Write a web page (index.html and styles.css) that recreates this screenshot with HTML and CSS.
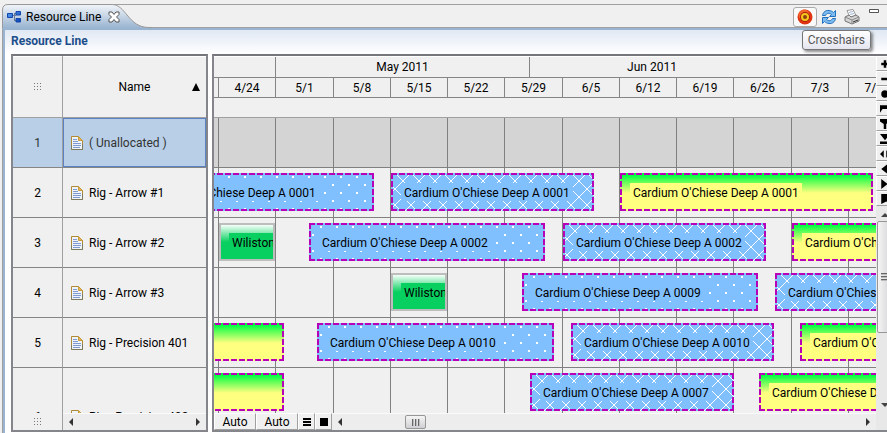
FILE: index.html
```html
<!DOCTYPE html>
<html lang="en">
<head>
<meta charset="utf-8">
<title>Resource Line</title>
<link rel="stylesheet" href="styles.css">
</head>
<body>
<svg class="defs" aria-hidden="true">
  <defs>
    <linearGradient id="tabFill" x1="0" y1="0" x2="0" y2="1"><stop offset="0" stop-color="#f2f5f9"/><stop offset="1" stop-color="#99b4d1"/></linearGradient>
    <linearGradient id="blueBox" x1="0" y1="0" x2="1" y2="1"><stop offset="0" stop-color="#5aa2f4"/><stop offset="1" stop-color="#0a3fb4"/></linearGradient>
    <symbol id="doc" viewBox="0 0 12 14">
      <path d="M.5.500h7l4 4v9H.5z" fill="#eef3fb" stroke="#b08a35"/>
      <path d="M.5 9v4.500h11V8" fill="none" stroke="#7d7a5c"/>
      <path d="M7.500.500v4h4z" fill="#e9b44c" stroke="#c59a3f"/>
      <path d="M2 3.500h4M2 5.500h5M2 7.500h8M2 9.500h8M2 11.500h7" stroke="#7f9ad0"/>
    </symbol>
    <symbol id="left" viewBox="0 0 8 8"><path d="M6 0v8L2 4z" fill="#333"/></symbol>
    <symbol id="right" viewBox="0 0 8 8"><path d="M2 0v8l4-4z" fill="#333"/></symbol>
    <symbol id="grip" viewBox="0 0 8 8"><path d="M0 .5h8M0 3.500h8M0 6.500h8" stroke="#777" stroke-dasharray="1 2"/></symbol>
  </defs>
</svg>

<header class="strip">
  <div class="tab">
    <svg class="tab-shape" width="150" height="28" viewBox="0 0 150 28" aria-hidden="true">
      <path d="M.5 28V10Q.5 4.500 6 4.500H110C124 4.500 126 27.500 147 27.500H150V28z" fill="url(#tabFill)"/>
      <path d="M.5 28V10Q.5 4.500 6 4.500H110C124 4.500 126 27.500 147 27.500H150" fill="none" stroke="#999"/>
    </svg>
    <svg class="tab-icon" width="14" height="12" viewBox="0 0 14 12" aria-hidden="true">
      <path d="M5 4.500h4M7.500 2.500v7M7 9.500h3M7 2.500h3" stroke="#6b7b96" fill="none"/>
      <path d="M.5 2.500h5v4h-5zM9 .5h4.500v3.500H9zM9 7.500h4.500v3.500H9z" fill="url(#blueBox)" stroke="#1248ac"/>
    </svg>
    <span class="tab-text">Resource Line</span>
    <button class="icon-btn" aria-label="Close">
      <svg width="12" height="12" viewBox="0 0 12 12"><path d="M1 1h3l2 2.500L8 1h3v2.500L8.500 6 11 8.500V11H8L6 8.500 4 11H1V8.500L3.500 6 1 3.500z" fill="#fff" stroke="#555"/></svg>
    </button>
  </div>
  <div class="strip-rest">
    <button class="icon-btn hot" aria-label="Crosshairs">
      <svg width="16" height="16" viewBox="0 0 16 16"><circle cx="8" cy="8" r="7.500" fill="#df3512"/><circle cx="7" cy="6" r="5.500" fill="#f2622b"/><circle cx="8" cy="8" r="5" fill="#a82108"/><circle cx="8" cy="8" r="4" fill="#f7c71d"/><circle cx="8" cy="8" r="2" fill="#8c4214"/></svg>
    </button>
    <button class="icon-btn" aria-label="Refresh">
      <svg width="16" height="16" viewBox="0 0 16 16"><g stroke="#2671bd" fill="#7dbcf0" stroke-linejoin="round"><path d="M1.500 6.500C2 3 5 1 8 1.500c2 .2 3.500 1 4.500 2L14.500 1.500v6h-6L10.500 5.500C8.500 3.500 5.500 4 4.500 6.500z"/><path d="M14.500 9.500C14 13 11 15 8 14.500c-2-.2-3.500-1-4.500-2L1.500 14.500v-6h6L5.500 10.500c2 2 5 1.500 6-1z"/></g></svg>
    </button>
    <button class="icon-btn" aria-label="Print">
      <svg width="16" height="16" viewBox="0 0 16 16"><path d="M3 1.500l6-1 3 6-6 2z" fill="#fff" stroke="#999"/><path d="M5 3.500l4-1M6 5.500l4-1" stroke="#9fb4d2"/><path d="M1 8l4-2 2 2 5-2 3 2v4l-7 3-7-3z" fill="#d2d2d2" stroke="#777"/><path d="M1 8l7 3 7-3M8 11v4" fill="none" stroke="#8b8b8b"/><path d="M9 13l5-2" stroke="#333"/></svg>
    </button>
    <button class="icon-btn minimize" aria-label="Minimize"><svg width="10" height="4" viewBox="0 0 10 4"><path d="M.5.500h9v3h-9z" fill="#fff" stroke="#555"/></svg></button>
    <div class="tooltip" role="tooltip">Crosshairs</div>
  </div>
</header>

<main class="view">
  <h1>Resource Line</h1>
  <div class="panels">
    <section class="panel names">
      <div class="clip">
        <table>
          <thead><tr><th class="num"><svg width="8" height="8" aria-hidden="true"><use href="#grip"/></svg></th><th><div class="name-head"><span>Name</span><svg width="8" height="8" viewBox="0 0 8 8" aria-hidden="true"><path d="M4 0l4 8H0z"/></svg></div></th></tr></thead>
          <tbody>
            <tr class="selected"><td class="num">1</td><td><div class="name"><svg width="12" height="14"><use href="#doc"/></svg>( Unallocated )</div></td></tr>
            <tr><td class="num">2</td><td><div class="name"><svg width="12" height="14"><use href="#doc"/></svg>Rig - Arrow #1</div></td></tr>
            <tr><td class="num">3</td><td><div class="name"><svg width="12" height="14"><use href="#doc"/></svg>Rig - Arrow #2</div></td></tr>
            <tr><td class="num">4</td><td><div class="name"><svg width="12" height="14"><use href="#doc"/></svg>Rig - Arrow #3</div></td></tr>
            <tr><td class="num">5</td><td><div class="name"><svg width="12" height="14"><use href="#doc"/></svg>Rig - Precision 401</div></td></tr>
            <tr class="tall"><td class="num">6</td><td><div class="name"><svg width="12" height="14"><use href="#doc"/></svg>Rig - Precision 402</div></td></tr>
          </tbody>
        </table>
      </div>
      <div class="foot">
        <div class="corner"><svg width="8" height="8" aria-hidden="true"><use href="#grip"/></svg></div>
        <div class="scroll-x"><button aria-label="Scroll left"><svg width="8" height="8"><use href="#left"/></svg></button><button aria-label="Scroll right"><svg width="8" height="8"><use href="#right"/></svg></button></div>
      </div>
    </section>

    <section class="panel chart">
      <div class="chart-main">
        <div class="clip">
          <div class="months"><span></span><span>May 2011</span><span>Jun 2011</span><span></span></div>
          <div class="weeks"><span></span><span>4/24</span><span>5/1</span><span>5/8</span><span>5/15</span><span>5/22</span><span>5/29</span><span>6/5</span><span>6/12</span><span>6/19</span><span>6/26</span><span>7/3</span><span>7/10</span></div>
          <div class="spacer"></div>
          <div class="rows">
            <div class="lines" aria-hidden="true"><i></i><i></i><i></i><i></i><i></i><i></i><i></i><i></i><i></i><i></i><i></i><i></i><i></i></div>
            <div class="row shaded"></div>
            <div class="row">
              <div class="bar dots" style="margin-left:-77px;width:237px"><span>Cardium O'Chiese Deep A 0001</span></div>
              <div class="bar hatch" style="margin-left:17px;width:203px"><span>Cardium O'Chiese Deep A 0001</span></div>
              <div class="bar sun" style="margin-left:26px;width:253px"><span>Cardium O'Chiese Deep A 0001</span></div>
            </div>
            <div class="row">
              <div class="bar green" style="margin-left:5px;width:56px"><span>Wiliston A 0001</span></div>
              <div class="bar dots" style="margin-left:34px;width:236px"><span>Cardium O'Chiese Deep A 0002</span></div>
              <div class="bar hatch" style="margin-left:18px;width:203px"><span>Cardium O'Chiese Deep A 0002</span></div>
              <div class="bar sun" style="margin-left:26px;width:253px"><span>Cardium O'Chiese Deep A 0002</span></div>
            </div>
            <div class="row">
              <div class="bar green" style="margin-left:177px;width:56px"><span>Wiliston A 0002</span></div>
              <div class="bar dots" style="margin-left:75px;width:236px"><span>Cardium O'Chiese Deep A 0009</span></div>
              <div class="bar hatch" style="margin-left:17px;width:203px"><span>Cardium O'Chiese Deep A 0009</span></div>
            </div>
            <div class="row">
              <div class="bar sun" style="margin-left:-183px;width:253px"></div>
              <div class="bar dots" style="margin-left:33px;width:237px"><span>Cardium O'Chiese Deep A 0010</span></div>
              <div class="bar hatch" style="margin-left:17px;width:203px"><span>Cardium O'Chiese Deep A 0010</span></div>
              <div class="bar sun" style="margin-left:26px;width:253px"><span>Cardium O'Chiese Deep A 0010</span></div>
            </div>
            <div class="row">
              <div class="bar sun" style="margin-left:-183px;width:253px"></div>
              <div class="bar hatch" style="margin-left:246px;width:204px"><span>Cardium O'Chiese Deep A 0007</span></div>
              <div class="bar sun" style="margin-left:25px;width:253px"><span>Cardium O'Chiese Deep A 0007</span></div>
            </div>
          </div>
        </div>
        <div class="foot">
          <button class="flat auto">Auto</button><button class="flat auto">Auto</button>
          <button class="flat small" aria-label="Row height"><svg width="8" height="8" viewBox="0 0 8 8"><path d="M0 0h8v2H0zM0 3h8v2H0zM0 6h8v2H0z"/></svg></button>
          <button class="flat small" aria-label="Fit"><svg width="8" height="8"><path d="M0 0h8v8H0z"/></svg></button>
          <div class="scroll-x"><button aria-label="Scroll left"><svg width="8" height="8"><use href="#left"/></svg></button><div class="thumb-x"><i></i><i></i><i></i></div><button class="end" aria-label="Scroll right"><svg width="8" height="8"><use href="#right"/></svg></button></div>
        </div>
      </div>
      <div class="tools">
        <button class="flat" aria-label="Zoom in"><svg width="8" height="8" viewBox="0 0 8 8"><path d="M3 1h2v2h2v2H5v2H3V5H1V3h2z"/></svg></button>
        <button class="flat" aria-label="Zoom out"><svg width="8" height="8" viewBox="0 0 8 8"><path d="M1 3h6v2H1z"/></svg></button>
        <button class="flat" aria-label="Center"><svg width="8" height="8" viewBox="0 0 8 8"><circle cx="4" cy="4" r="3"/></svg></button>
        <button class="flat" aria-label="Span"><svg width="8" height="8" viewBox="0 0 8 8"><path d="M0 1h8v6L6 4H2L0 7z"/></svg></button>
        <button class="flat" aria-label="Top"><svg width="8" height="8" viewBox="0 0 8 8"><path d="M0 0h8v2L5 4v4H3V4L0 2z"/></svg></button>
        <button class="flat" aria-label="Bottom"><svg width="8" height="8" viewBox="0 0 8 8"><path d="M0 0h8L4 5zM0 6h8v2H0z"/></svg></button>
        <button class="flat" aria-label="Both ways"><svg width="8" height="8" viewBox="0 0 8 8"><path d="M0 4l3-3v6zM8 4L5 1v6z"/></svg></button>
        <button class="flat" aria-label="Back"><svg width="8" height="8" viewBox="0 0 8 8"><path d="M1 4l5-4v8z"/></svg></button>
        <button class="flat" aria-label="Forward"><svg width="8" height="8" viewBox="0 0 8 8"><path d="M6 4L1 0v8z"/></svg></button>
        <button class="flat" aria-label="Bookmark"><svg width="8" height="8" viewBox="0 0 8 8"><path d="M1 0h7v8L5 6 1 8z"/></svg></button>
        <div class="scroll-y">
          <button aria-label="Scroll up"><svg width="8" height="6" viewBox="0 0 8 6"><path d="M4 1l4 4H0z" fill="#444"/></svg></button>
          <div class="thumb-y"><i></i><i></i><i></i></div>
          <button class="end" aria-label="Scroll down"><svg width="8" height="6" viewBox="0 0 8 6"><path d="M4 5l4-4H0z" fill="#444"/></svg></button>
        </div>
      </div>
    </section>
  </div>
</main>
</body>
</html>
```

FILE: styles.css
```css
* { box-sizing: border-box; }
body {
  margin: 0;
  height: 100vh;
  display: flex;
  flex-direction: column;
  overflow: hidden;
  background: #f0f0f0;
  color: #000;
  font: 12px/16px Roboto, "Open Sans", sans-serif;
}
button { font: inherit; color: inherit; margin: 0; padding: 0; border: 0; background: none; }
svg { display: block; flex: none; }
.defs { position: absolute; width: 0; height: 0; }

/* tab strip */
.strip { display: flex; flex: none; height: 28px; padding-left: 2px; }
.tab { position: relative; display: flex; align-items: center; width: 150px; padding: 5px 0 0 5px; gap: 5px; }
.tab-shape { position: absolute; left: 0; top: 0; }
.tab-icon, .tab-text, .tab .icon-btn { position: relative; }
.tab .icon-btn { margin-left: 2px; }
.strip-rest {
  position: relative;
  flex: 1;
  display: flex;
  justify-content: flex-end;
  align-items: center;
  gap: 7px;
  margin-top: 4px;
  margin-left: -40px;
  padding-right: 8px;
  border-top: 1px solid #a0a0a0;
}
.strip-rest::after { content: ""; position: absolute; left: 40px; right: 0; bottom: 0; border-bottom: 1px solid #a0a0a0; }
.hot { padding: 1px 3px; border: 1px solid #aaa; border-radius: 3px; background: #fafafa; margin-right: -3px; }
.minimize { align-self: flex-start; margin: 4px 0 0 2px; }
.tooltip {
  position: absolute;
  z-index: 5;
  right: 16px;
  top: 25px;
  padding: 1px 5px;
  border: 1px solid #767676;
  border-radius: 3px;
  background: linear-gradient(#fff, #e4e5f0);
  box-shadow: 2px 2px 3px rgba(0, 0, 0, .45);
  color: #575757;
}

/* view */
.view {
  flex: 1;
  min-height: 0;
  display: flex;
  flex-direction: column;
  margin-left: 2px;
  border-left: 1px solid #a0a0a0;
  border-top: 2px solid #99b4d1;
  box-shadow: inset 2px 0 #99b4d1;
  padding-left: 2px;
  background: #fff;
  background-clip: padding-box;
}
h1 {
  flex: none;
  margin: 0;
  height: 24px;
  padding: 3px 6px;
  background: linear-gradient(#e0e8f3, #fff);
  color: #1c4e8b;
  font-size: 12px;
  line-height: 16px;
}
.panels { flex: 1; min-height: 0; display: flex; gap: 4px; padding: 0 0 1px 6px; }
.panel { border: 2px solid #85858c; border-top-color: #75757c; background: #f0f0f0; }
.clip { flex: 1; min-height: 0; overflow: hidden; }
.foot { flex: none; display: flex; height: 17px; background: #f0f0f0; }

/* resource table */
.names { width: 197px; flex: none; display: flex; flex-direction: column; }
table { width: 100%; border-collapse: separate; border-spacing: 0; table-layout: fixed; }
th { height: 62px; padding: 0; border-bottom: 1px solid #a0a0a0; font-weight: normal; box-shadow: inset 0 1px #fff; }
td { height: 50px; padding: 0; border-bottom: 1px solid #858585; }
.num { width: 50px; border-right: 1px solid #a0a0a0; text-align: center; }
.num svg { margin: 0 auto; }
.name-head { display: flex; align-items: center; padding-right: 6px; }
.name-head span { flex: 1; padding-left: 14px; }
.name { display: flex; align-items: center; gap: 6px; height: 49px; padding-left: 8px; }
.tall td { height: 98px; }
.selected { background: #b8cfe7; color: #333; }
.selected .name { border: 1px solid #5c82c4; padding-left: 7px; }
.corner { display: flex; align-items: center; justify-content: center; width: 50px; border-right: 1px solid #a0a0a0; }
.scroll-x { flex: 1; display: flex; align-items: center; justify-content: space-between; padding: 0 4px; border-top: 1px solid #fafafa; background: #ededed; }

/* schedule */
.chart { flex: 1; min-width: 0; display: flex; border-right: 0; }
.chart-main { flex: 1; min-width: 0; display: flex; flex-direction: column; }
.months, .weeks, .lines {
  display: grid;
  grid-template-columns: 5px 57px 58px 57px 57px 57px 58px 57px 57px 57px 58px 57px 57px;
}
.months { grid-template-columns: 62px 254px 245px 254px; height: 22px; border-bottom: 1px solid #858585; box-shadow: inset 0 1px #fff; padding-top: 1px; }
.weeks { height: 20px; border-bottom: 1px solid #858585; }
.months span, .weeks span { border-right: 1px solid #858585; text-align: center; line-height: 20px; }
.spacer { height: 20px; border-bottom: 1px solid #a0a0a0; }
.rows { position: relative; }
.lines { position: absolute; inset: 0; }
.lines i { border-right: 1px solid #808080; }
.row { display: flex; height: 50px; padding-top: 5px; border-bottom: 1px solid #808080; }
.shaded { background: #d4d4d4; }
.bar {
  --fill: #80c0ff;
  position: relative;
  z-index: 1;
  flex: none;
  height: 38px;
  padding: 10px;
  overflow: hidden;
  white-space: nowrap;
  background-color: var(--fill);
}
.bar span { display: block; width: max-content; height: 18px; padding: 0 3px; line-height: 20px; background: var(--fill); }
.dots {
  background-image:
    conic-gradient(from 0deg at 2px 2px, transparent 75%, #fff 0),
    conic-gradient(from 0deg at 2px 2px, transparent 75%, #fff 0);
  background-size: 16px 16px;
  background-position: 11px 3px, 3px 11px;
}
.hatch {
  background-image:
    linear-gradient(45deg, transparent 47%, #fff 47%, #fff 53%, transparent 53%),
    linear-gradient(-45deg, transparent 47%, #fff 47%, #fff 53%, transparent 53%);
  background-size: 16px 16px;
  background-position: 4px 0;
}
.sun { --fill: #ffff80; background-image: linear-gradient(#00ff40 2px, #ffff80 20px); }
.green { --fill: #08d060; padding: 8px; border: 2px solid #bdbdbd; background-image: linear-gradient(#f4fff8, #08d060 17px); }
.dots::after, .hatch::after, .sun::after {
  content: "";
  position: absolute;
  inset: 0;
  background:
    repeating-linear-gradient(90deg, #b800b8 0 6px, transparent 6px 8px) 0 0 / 100% 2px no-repeat,
    repeating-linear-gradient(90deg, #b800b8 0 6px, transparent 6px 8px) 0 100% / 100% 2px no-repeat,
    repeating-linear-gradient(#b800b8 0 6px, transparent 6px 8px) 0 0 / 2px 100% no-repeat,
    repeating-linear-gradient(#b800b8 0 6px, transparent 6px 8px) 100% 0 / 2px 100% no-repeat;
}

/* buttons and scroll bars around the schedule */
.flat { border: 1px solid #a0a0a0; border-top-color: #fff; border-left-color: #fff; background: #f0f0f0; }
.auto { width: 42px; line-height: 14px; }
.small { width: 17px; display: flex; align-items: center; justify-content: center; }
.thumb-x {
  display: flex; justify-content: center; align-items: center; gap: 1px;
  width: 21px; height: 14px; margin-left: 61px;
  border: 1px solid #979797; border-radius: 2px;
  background: linear-gradient(#f5f5f5, #d0d0d4);
}
.thumb-x i { width: 2px; height: 7px; background: #666; border-right: 1px solid #bbb; }
.end { margin-left: auto; }
.tools { width: 11px; flex: none; display: flex; flex-direction: column; overflow: hidden; background: #e8e8e8; }
.tools .flat { flex: none; width: 18px; height: 15px; display: flex; align-items: center; justify-content: center; }
.tools .flat svg { width: 10px; height: 10px; }
.scroll-y { flex: 1; width: 18px; display: flex; flex-direction: column; align-items: center; padding: 6px 0 22px; }
.thumb-y {
  display: flex; flex-direction: column; align-items: center; justify-content: center; gap: 1px;
  width: 16px; height: 112px; margin-top: 3px;
  border: 1px solid #979797; border-radius: 2px;
  background: linear-gradient(90deg, #f5f5f5, #d0d0d4);
}
.thumb-y i { width: 8px; height: 2px; background: #666; border-bottom: 1px solid #bbb; }
.scroll-y .end { margin: auto 0 0; }
```
